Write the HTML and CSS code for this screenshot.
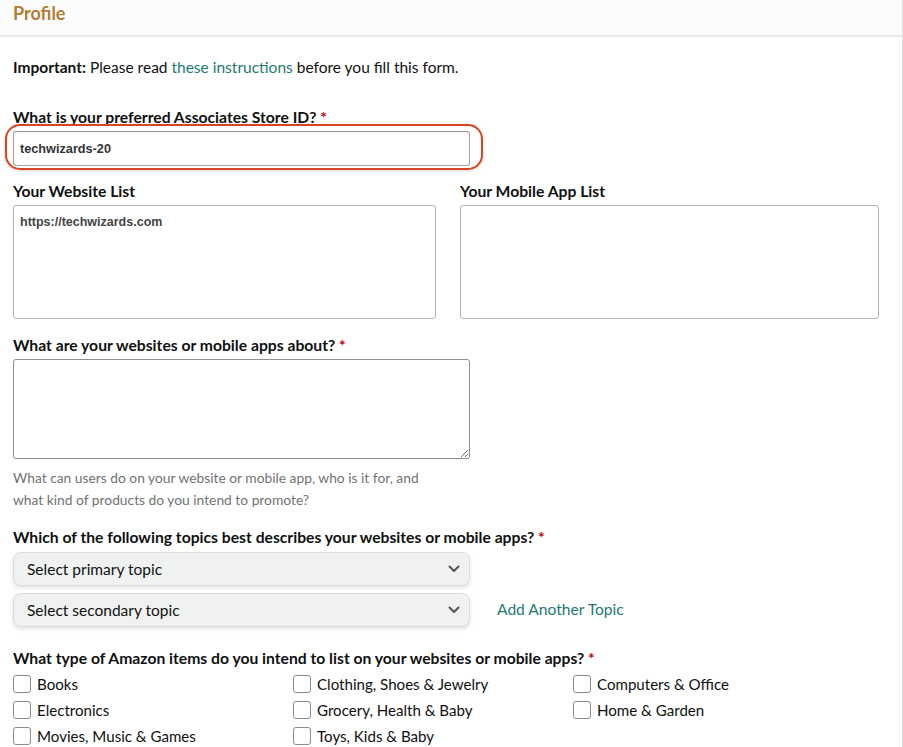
FILE: index.html
```html
<!DOCTYPE html>
<html lang="en">
<head>
<meta charset="utf-8">
<title>Profile</title>
<link rel="stylesheet" href="styles.css">
</head>
<body>
<div class="panel">
  <div class="panel-head"><h2 class="panel-title">Profile</h2></div>
  <div class="panel-body">
    <p class="notice"><b>Important:</b> Please read <a href="#" class="link">these instructions</a> before you fill this form.</p>

    <label class="label label-first">What is your preferred Associates Store ID? <span class="req">*</span></label>
    <div class="highlight-wrap">
      <input class="text-input" type="text" value="techwizards-20">
      <span class="highlight"></span>
    </div>

    <div class="two-col">
      <div class="col">
        <label class="label">Your Website List</label>
        <textarea class="area area-list">https://techwizards.com</textarea>
      </div>
      <div class="col">
        <label class="label">Your Mobile App List</label>
        <textarea class="area area-list"></textarea>
      </div>
    </div>

    <label class="label label-gap">What are your websites or mobile apps about? <span class="req">*</span></label>
    <textarea class="area area-about"></textarea>
    <p class="hint">What can users do on your website or mobile app, who is it for, and<br>what kind of products do you intend to promote?</p>

    <label class="label label-gap">Which of the following topics best describes your websites or mobile apps? <span class="req">*</span></label>
    <div class="select-row select-row-first">
      <div class="select-wrap">
        <select class="select"><option>Select primary topic</option></select>
        <svg class="chev" width="12" height="8" viewBox="0 0 12 8"><path d="M1.5 1.5 L6 6 L10.5 1.5" fill="none" stroke="#555" stroke-width="2" stroke-linecap="round" stroke-linejoin="round"/></svg>
      </div>
    </div>
    <div class="select-row">
      <div class="select-wrap">
        <select class="select"><option>Select secondary topic</option></select>
        <svg class="chev" width="12" height="8" viewBox="0 0 12 8"><path d="M1.5 1.5 L6 6 L10.5 1.5" fill="none" stroke="#555" stroke-width="2" stroke-linecap="round" stroke-linejoin="round"/></svg>
      </div>
      <a href="#" class="link add-topic">Add Another Topic</a>
    </div>

    <label class="label label-gap2">What type of Amazon items do you intend to list on your websites or mobile apps? <span class="req">*</span></label>
    <div class="checks">
      <label class="check"><input type="checkbox"><span class="box"></span>Books</label>
      <label class="check"><input type="checkbox"><span class="box"></span>Clothing, Shoes &amp; Jewelry</label>
      <label class="check"><input type="checkbox"><span class="box"></span>Computers &amp; Office</label>
      <label class="check"><input type="checkbox"><span class="box"></span>Electronics</label>
      <label class="check"><input type="checkbox"><span class="box"></span>Grocery, Health &amp; Baby</label>
      <label class="check"><input type="checkbox"><span class="box"></span>Home &amp; Garden</label>
      <label class="check"><input type="checkbox"><span class="box"></span>Movies, Music &amp; Games</label>
      <label class="check"><input type="checkbox"><span class="box"></span>Toys, Kids &amp; Baby</label>
    </div>
  </div>
</div>
</body>
</html>
```

FILE: styles.css
```css
* { box-sizing: border-box; }

html, body {
  margin: 0;
  padding: 0;
  background: #ffffff;
}

body {
  font-family: Lato, "Noto Sans", "Liberation Sans", sans-serif;
  color: #0f1111;
  font-size: 14px;
  overflow: hidden;
}

.panel {
  width: 903px;
  min-height: 747px;
  border-right: 1px solid #dddddd;
}

.panel-head {
  height: 37px;
  border-bottom: 2px solid #e9e9e9;
  background: #fcfcfc;
  padding-left: 13px;
}

.panel-title {
  margin: 0;
  font-size: 18px;
  font-weight: 700;
  line-height: 26px;
  color: #b07e35;
}

.panel-body {
  padding: 0 13px;
}

.notice {
  margin: 20px 0 0;
  font-size: 15.5px;
  line-height: 20px;
}

.link {
  color: #1d7a72;
  text-decoration: none;
}

.label {
  display: block;
  font-size: 15.7px;
  font-weight: 700;
  line-height: 20px;
  margin-bottom: 4px;
}

.label-first { margin-top: 30px; }
.label-gap { margin-top: 16px; }
.label-gap2 { margin-top: 21px; margin-bottom: 3px; }

.req { color: #c40000; }

.highlight-wrap {
  position: relative;
  width: 457px;
}

.text-input {
  display: block;
  width: 457px;
  height: 35px;
  border: 1px solid #a6a6a6;
  border-top-color: #949494;
  border-radius: 3px;
  padding: 0 6px;
  font-family: "Liberation Sans", Arial, sans-serif;
  font-size: 12.7px;
  font-weight: 700;
  color: #333333;
  background: #fff;
  box-shadow: inset 0 1px 2px rgba(0,0,0,0.08);
}

.highlight {
  position: absolute;
  left: -8px;
  top: -7px;
  width: 478px;
  height: 46px;
  border: 2.5px solid #d8451f;
  border-radius: 15px;
  box-shadow: 0 1px 3px rgba(0,0,0,0.18);
  pointer-events: none;
}

.two-col {
  display: grid;
  grid-template-columns: 423px 419px;
  column-gap: 24px;
  margin-top: 15px;
}

.area {
  display: block;
  border: 1px solid #b3b3b3;
  border-radius: 3px;
  padding: 9px 6px;
  font-family: "Liberation Sans", Arial, sans-serif;
  font-size: 12.5px;
  font-weight: 700;
  color: #444;
  background: #fff;
}

.area-list {
  width: 100%;
  height: 114px;
  resize: none;
}

.area-about {
  width: 457px;
  height: 100px;
  border-color: #8f8f8f;
}

.hint {
  margin: 8px 0 0;
  font-size: 13.8px;
  line-height: 22px;
  color: #6f7373;
}

.select-row {
  display: flex;
  align-items: center;
  gap: 27px;
  margin-top: 7px;
}

.select-row-first { margin-top: 5px; }

.select-wrap {
  position: relative;
  width: 457px;
  height: 34px;
}

.select {
  -webkit-appearance: none;
  appearance: none;
  display: block;
  width: 100%;
  height: 100%;
  border: 1px solid #dcdcdc;
  border-radius: 8px;
  background: #f0f2f2;
  box-shadow: 0 2px 4px rgba(15,17,17,0.12);
  padding: 0 13px;
  font-family: Lato, "Noto Sans", sans-serif;
  font-size: 15.5px;
  color: #0f1111;
}

.chev {
  position: absolute;
  right: 10px;
  top: 13px;
  pointer-events: none;
}

.add-topic {
  font-size: 15.6px;
  margin-top: -3px;
}

.checks {
  display: grid;
  grid-template-columns: 280px 280px 280px;
}

.check {
  display: flex;
  align-items: center;
  height: 26px;
  font-size: 15.1px;
  color: #0f1111;
}

.check input {
  position: absolute;
  opacity: 0;
  width: 0;
  height: 0;
}

.box {
  width: 18px;
  height: 18px;
  border: 1px solid #888c8c;
  border-radius: 3px;
  background: #fff;
  margin-right: 6px;
  flex: none;
}
```
